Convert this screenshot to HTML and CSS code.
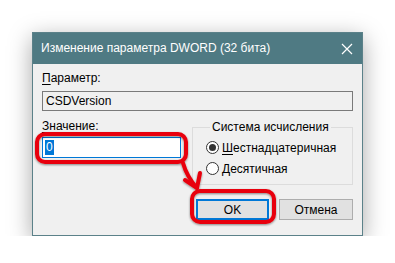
FILE: index.html
```html
<!DOCTYPE html>
<html lang="ru">
<head>
    <meta charset="UTF-8">
    <title>Изменение параметра DWORD (32 бита)</title>
    <link rel="stylesheet" href="styles.css">
</head>
<body>

    <div class="page">
        <div class="dialog">
            <div class="title-bar">
                <span class="title">Изменение параметра DWORD (32 бита)</span>
                <svg class="close" width="12" height="12" viewBox="0 0 12 12">
                    <path d="M1 1 L11 11 M11 1 L1 11" stroke="#fff" stroke-width="1.2"/>
                </svg>
            </div>

            <div class="content">
                <label class="lbl"><u>П</u>араметр:</label>
                <div class="field-ro">CSDVersion</div>

                <div class="row">
                    <div class="value-col">
                        <label class="lbl"><u>З</u>начение:</label>
                        <div class="field-value"><span class="sel">0</span></div>
                    </div>

                    <fieldset class="group">
                        <legend>Система исчисления</legend>
                        <div class="radio-row">
                            <span class="radio checked"></span>
                            <span><u>Ш</u>естнадцатеричная</span>
                        </div>
                        <div class="radio-row">
                            <span class="radio"></span>
                            <span><u>Д</u>есятичная</span>
                        </div>
                    </fieldset>
                </div>

                <div class="buttons">
                    <button class="btn default">OK</button>
                    <button class="btn">Отмена</button>
                </div>
            </div>
        </div>
    </div>

    <!-- красные пометки поверх скриншота -->
    <svg class="marks" width="395" height="263" viewBox="0 0 395 263">
        <defs>
            <filter id="sh" x="-20%" y="-20%" width="140%" height="140%">
                <feDropShadow dx="0" dy="1" stdDeviation="1.2" flood-color="#000" flood-opacity="0.45"/>
            </filter>
        </defs>
        <g fill="none" stroke="#e8000b" stroke-width="4" filter="url(#sh)">
            <rect x="37" y="134" width="149" height="28" rx="8"/>
            <rect x="192" y="191" width="82" height="31" rx="8"/>
            <path d="M183 163 Q187 177 197 188" stroke-linecap="round"/>
            <path d="M185 180 L197 188 L200 173" stroke-linecap="round" stroke-linejoin="round"/>
        </g>
    </svg>

</body>
</html>
```

FILE: styles.css
```css
body {
    margin: 0;
    background: #fff;
    font-family: "Liberation Sans", Arial, sans-serif;
    font-size: 12px;
    color: #000;
}

.page {
    padding: 32px 0 0 32px;
}

.dialog {
    width: 329px;
    border: 1px solid #5b8189;
    background: #f0f0f0;
    box-shadow: 0 6px 22px rgba(0, 0, 0, 0.35);
}

.title-bar {
    height: 31px;
    background: #4f7a83;
    color: #fff;
    display: flex;
    align-items: center;
    justify-content: space-between;
    padding: 0 9px 0 8px;
}

    .title-bar .title {
        font-size: 12px;
        margin-top: -1px;
    }

.content {
    padding: 6px 9px 15px 9px;
}

.lbl {
    display: block;
    line-height: 16px;
    color: #000;
}

u {
    text-decoration-thickness: 1px;
    text-underline-offset: 2px;
}

.field-ro {
    margin-top: 5px;
    height: 18px;
    line-height: 18px;
    border: 1px solid #7a7a7a;
    padding: 0 3px;
    background: #f0f0f0;
}

.row {
    display: flex;
    align-items: flex-start;
    gap: 11px;
    margin-top: 7px;
}

.value-col {
    width: 139px;
}

.field-value {
    margin-top: 3px;
    height: 19px;
    border: 1px solid #0078d7;
    background: #fff;
    display: flex;
    align-items: center;
    padding: 0 2px;
}

    .field-value .sel {
        background: #0078d7;
        color: #fff;
        line-height: 15px;
        padding: 0 1px;
    }

.group {
    margin: 1px 0 0 0;
    padding: 2px 0 5px 13px;
    width: 161px;
    box-sizing: border-box;
    border: 1px solid #dcdcdc;
}

    .group legend {
        padding: 0 2px;
        margin-left: 4px;
        line-height: 16px;
    }

.radio-row {
    display: flex;
    align-items: center;
    gap: 3px;
    height: 21px;
}

.radio {
    width: 11px;
    height: 11px;
    border: 1px solid #333;
    border-radius: 50%;
    background: #fff;
    display: flex;
    align-items: center;
    justify-content: center;
}

    .radio.checked::after {
        content: "";
        width: 7px;
        height: 7px;
        border-radius: 50%;
        background: #333;
    }

.buttons {
    display: flex;
    justify-content: flex-end;
    gap: 10px;
    margin-top: 14px;
}

.btn {
    width: 74px;
    height: 21px;
    font-family: inherit;
    font-size: 12px;
    background: #e1e1e1;
    border: 1px solid #adadad;
    padding: 0;
    color: #000;
}

    .btn.default {
        border: 2px solid #0078d7;
        width: 73px;
    }

.marks {
    position: absolute;
    left: 0;
    top: 0;
    pointer-events: none;
}
```
